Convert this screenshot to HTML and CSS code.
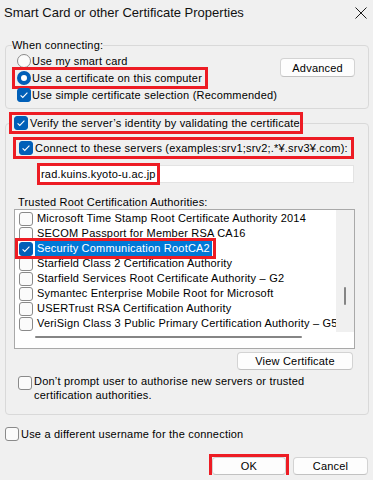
FILE: index.html
```html
<!DOCTYPE html>
<html>

<head>
    <meta charset="utf-8">
    <link rel="stylesheet" href="styles.css">
</head>

<body>

    <!-- Window title -->
    <div class="titlebar">
        <span class="title">Smart Card or other Certificate Properties</span>
        <svg class="close" width="12" height="12" viewBox="0 0 12 12">
            <path d="M0.5 0.5L11.5 11.5M11.5 0.5L0.5 11.5" stroke="#1b1b1b" stroke-width="1" fill="none"/>
        </svg>
    </div>

    <div class="dialog">

        <!-- When connecting -->
        <fieldset class="group">
            <legend class="plain-legend">When connecting:</legend>
            <div class="connect-line">
                <div class="options">
                    <div class="row"><span class="radio"></span>Use my smart card</div>
                    <div class="row mark"><span class="radio on"></span>Use a certificate on this computer</div>
                    <div class="row">
                        <span class="cb on"><svg width="12" height="12" viewBox="0 0 12 12"><path d="M2.6 6.3l2.2 2.2 4.6-4.8" fill="none" stroke="#fff" stroke-width="1.1"/></svg></span>
                        Use simple certificate selection (Recommended)
                    </div>
                </div>
                <button class="btn advanced">Advanced</button>
            </div>
        </fieldset>

        <!-- Server verification -->
        <fieldset class="group server-group">
            <legend class="check-legend mark">
                <span class="cb on"><svg width="12" height="12" viewBox="0 0 12 12"><path d="M2.6 6.3l2.2 2.2 4.6-4.8" fill="none" stroke="#fff" stroke-width="1.1"/></svg></span>
                Verify the server’s identity by validating the certificate
            </legend>
            <div class="server-box">
                <div class="row connect-row mark">
                    <span class="cb on"><svg width="12" height="12" viewBox="0 0 12 12"><path d="M2.6 6.3l2.2 2.2 4.6-4.8" fill="none" stroke="#fff" stroke-width="1.1"/></svg></span>
                    Connect to these servers (examples:srv1;srv2;.*¥.srv3¥.com):
                </div>
                <div class="server-field"><span class="mark">rad.kuins.kyoto-u.ac.jp</span></div>

                <div class="list-label">Trusted Root Certification Authorities:</div>
                <div class="cert-list">
                    <div class="cert-rows">
                        <div class="cert"><span class="cb"></span><span class="cert-name">Microsoft Time Stamp Root Certificate Authority 2014</span></div>
                        <div class="cert"><span class="cb"></span><span class="cert-name">SECOM Passport for Member RSA CA16</span></div>
                        <div class="cert selected mark">
                            <span class="cb on"><svg width="12" height="12" viewBox="0 0 12 12"><path d="M2.6 6.3l2.2 2.2 4.6-4.8" fill="none" stroke="#fff" stroke-width="1.1"/></svg></span>
                            <span class="cert-name">Security Communication RootCA2</span>
                        </div>
                        <div class="cert"><span class="cb"></span><span class="cert-name">Starfield Class 2 Certification Authority</span></div>
                        <div class="cert"><span class="cb"></span><span class="cert-name">Starfield Services Root Certificate Authority – G2</span></div>
                        <div class="cert"><span class="cb"></span><span class="cert-name">Symantec Enterprise Mobile Root for Microsoft</span></div>
                        <div class="cert"><span class="cb"></span><span class="cert-name">USERTrust RSA Certification Authority</span></div>
                        <div class="cert"><span class="cb"></span><span class="cert-name">VeriSign Class 3 Public Primary Certification Authority – G5</span></div>
                    </div>
                    <div class="vscroll"><span class="thumb"></span></div>
                    <div class="hscroll"><span class="thumb"></span></div>
                    <div class="corner"></div>
                </div>

                <button class="btn view">View Certificate</button>

                <div class="wrap-row">
                    <span class="cb"></span>
                    <span class="wrap-text">Don’t prompt user to authorise new servers or trusted certification authorities.</span>
                </div>
            </div>
        </fieldset>

        <div class="row username-row"><span class="cb"></span>Use a different username for the connection</div>

        <!-- Dialog buttons -->
        <div class="actions">
            <span class="ok-wrap mark"><button class="btn ok">OK</button></span>
            <button class="btn cancel">Cancel</button>
        </div>
    </div>

</body>

</html>
```

FILE: styles.css
```css
/* Page and window */
body {
    margin: 0;
    background-color: #f0f0f0;
    font-family: "Liberation Sans", Arial, sans-serif;
    font-size: 11px;
    letter-spacing: 0.2px;
    color: #000;
}

.titlebar {
    height: 24px;
    display: flex;
    align-items: center;
    justify-content: space-between;
    padding: 0 6px 0 4px;
}

.title {
    font-size: 13px;
    letter-spacing: 0;
    color: #111;
}

.close {
    margin-top: 1px;
}

.dialog {
    padding: 14px 4px 0 5px;
}

/* Group boxes */
.group {
    margin: 0;
    padding: 0;
    min-width: 0;
    border: 1px solid #d9d9d9;
    border-radius: 4px;
}

.plain-legend {
    margin-left: 6px;
    padding: 0;
    line-height: 14px;
}

.check-legend {
    margin-left: 6px;
    padding: 0 0 0 2px;
    height: 16px;
    display: flex;
    align-items: center;
    gap: 2px;
    white-space: nowrap;
}

.server-group {
    margin-top: 6px;
}

/* Red highlight boxes */
.mark {
    outline: 3px solid #ed1c24;
}

/* Option rows */
.connect-line {
    display: flex;
    justify-content: space-between;
    align-items: flex-start;
    padding: 1px 13px 5px 9px;
}

.options {
    display: flex;
    flex-direction: column;
    align-items: flex-start;
    gap: 1px;
}

.row {
    display: inline-flex;
    align-items: center;
    height: 16px;
    padding: 0 3px 0 2px;
    gap: 1px;
    white-space: nowrap;
}

.radio {
    width: 14px;
    height: 14px;
    box-sizing: border-box;
    border: 1px solid #8a8a8a;
    border-radius: 50%;
    background-color: #fbfbfb;
    flex: none;
}

.radio.on {
    border: 4px solid #005fb8;
    background-color: #fff;
}

.cb {
    width: 14px;
    height: 14px;
    box-sizing: border-box;
    border: 1px solid #8a8a8a;
    border-radius: 3px;
    background-color: #fbfbfb;
    flex: none;
    display: flex;
    align-items: center;
    justify-content: center;
}

.cb.on {
    background-color: #005fb8;
    border-color: #005fb8;
}

/* Buttons */
.btn {
    font-family: inherit;
    font-size: 11px;
    letter-spacing: 0.2px;
    color: #000;
    padding: 0;
    box-sizing: border-box;
    background-color: #fdfdfd;
    border: 1px solid #d3d3d3;
    border-bottom-color: #c2c2c2;
    border-radius: 4px;
}

.advanced {
    width: 87px;
    height: 19px;
    margin-top: 5px;
}

/* Server section */
.server-box {
    display: flex;
    flex-direction: column;
    align-items: flex-start;
    padding: 9px 13px 12px 0;
}

.connect-row {
    margin-left: 10px;
    padding-left: 3px;
    gap: 2px;
}

.server-field {
    align-self: stretch;
    margin: 9px 1px 0 32px;
    height: 18px;
    box-sizing: border-box;
    border: 1px solid #e3e3e3;
    background-color: #fff;
    display: flex;
    align-items: center;
    padding-left: 1px;
}

.server-field span {
    height: 16px;
    line-height: 16px;
    padding: 0 1px;
}

.list-label {
    margin: 13px 0 0 12px;
    line-height: 13px;
}

/* Certificate list */
.cert-list {
    align-self: stretch;
    margin-left: 8px;
    height: 140px;
    box-sizing: border-box;
    border: 1px solid #a9a9a9;
    background-color: #fff;
    display: grid;
    grid-template-columns: 1fr 18px;
    grid-template-rows: 122px 16px;
}

.cert-rows {
    overflow: hidden;
    padding-top: 1px;
    white-space: nowrap;
}

.cert {
    display: flex;
    align-items: center;
    height: 15px;
    padding-left: 4px;
}

.cert-name {
    margin-left: 2px;
    padding: 0 2px;
    line-height: 15px;
}

.cert.selected {
    width: fit-content;
    margin-left: 3px;
    padding: 0 1px;
}

.cert.selected .cert-name {
    background-color: #0078d7;
    color: #fff;
}

.vscroll {
    background-color: #f0f0f0;
    display: flex;
    justify-content: center;
}

.vscroll .thumb {
    width: 2px;
    height: 18px;
    margin-top: 77px;
    border-radius: 1px;
    background-color: #858585;
}

.hscroll .thumb {
    display: block;
    width: 267px;
    height: 2px;
    margin: 4px 0 0 20px;
    border-radius: 1px;
    background-color: #858585;
}

.corner {
    background-color: #fff;
}

.view {
    align-self: flex-end;
    width: 116px;
    height: 18px;
    margin: 3px 2px 0 0;
}

.wrap-row {
    display: flex;
    align-items: flex-start;
    gap: 2px;
    margin: 4px 0 0 12px;
    line-height: 14px;
}

.wrap-row .cb {
    margin-top: 2px;
}

.wrap-text {
    max-width: 300px;
}

/* Bottom of dialog */
.username-row {
    display: flex;
    width: fit-content;
    margin-top: 11px;
    padding: 0;
    gap: 2px;
}

.actions {
    display: flex;
    justify-content: flex-end;
    gap: 7px;
    margin-top: 15px;
    padding-right: 1px;
}

.ok-wrap {
    display: flex;
}

.ok {
    width: 74px;
    height: 18px;
}

.cancel {
    width: 75px;
    height: 18px;
}
```
